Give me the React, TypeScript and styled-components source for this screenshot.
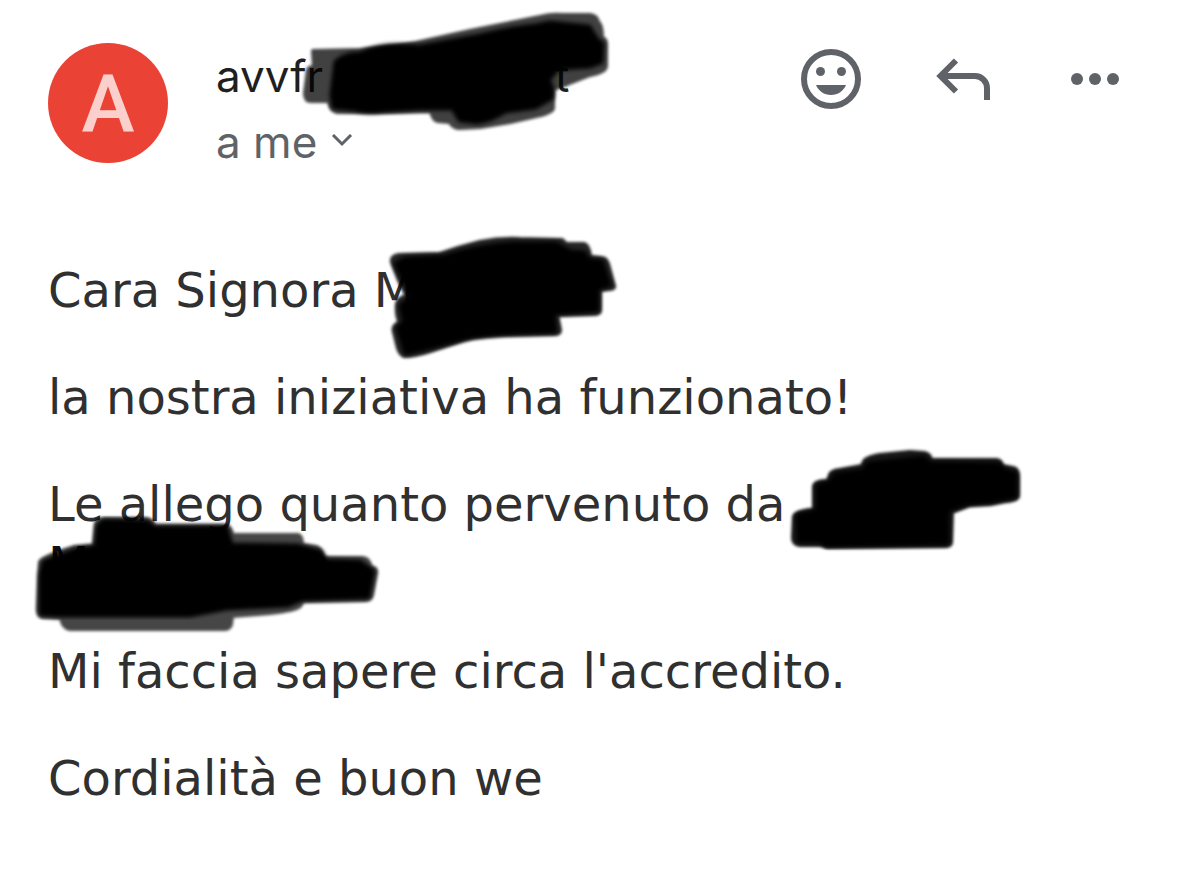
import React from 'react';
import styled, { createGlobalStyle } from 'styled-components';

const GlobalStyle = createGlobalStyle`
  body {
    margin: 0;
    background: #ffffff;
  }
`;

const Mail = styled.article`
  padding: 43px 48px 48px;
  color: #303030;
`;

const Header = styled.header`
  display: flex;
  align-items: flex-start;
`;

const Avatar = styled.div`
  flex: none;
  width: 120px;
  height: 120px;
  margin-right: 48px;
  border-radius: 50%;
  background: #ea4335;
  color: #fbd0cc;
  font: 500 80px/122px Roboto, sans-serif;
  text-align: center;
`;

const Sender = styled.div`
  flex: 1;
  min-width: 0;
  font-family: Inter, sans-serif;
  font-size: 44px;
  line-height: 66px;
`;

const Name = styled.div`
  position: relative;
  color: #1f1f1f;
  white-space: nowrap;
`;

const Gap = styled.span<{ $width: number }>`
  display: inline-block;
  width: ${({ $width }) => $width}px;
`;

const Recipient = styled.button`
  display: flex;
  align-items: center;
  gap: 14px;
  padding: 0;
  border: 0;
  background: none;
  color: #5f6368;
  font: inherit;
`;

const Actions = styled.div`
  flex: none;
  display: flex;
  gap: 60px;
`;

const IconButton = styled.button`
  width: 72px;
  height: 72px;
  padding: 0;
  border: 0;
  background: none;
  color: #5f6368;

  svg {
    display: block;
  }
`;

const Body = styled.div`
  margin-top: 85px;
  font-family: Verdana, 'DejaVu Sans', sans-serif;
  font-size: 48px;
  line-height: 60px;
`;

const Paragraph = styled.p`
  position: relative;
  margin: 0 0 47px;
`;

const Faint = styled.span`
  color: #111111;
`;

const Marker = styled.svg<{ $left: number; $top: number }>`
  position: absolute;
  left: ${({ $left }) => $left}px;
  top: ${({ $top }) => $top}px;
  overflow: visible;
  pointer-events: none;
`;

type ScribbleProps = {
  id: string;
  left: number;
  top: number;
  width: number;
  height: number;
  edge: string;
  core: string;
  edgeOpacity?: number;
};

function Scribble({ id, left, top, width, height, edge, core, edgeOpacity = 0.85 }: ScribbleProps) {
  return (
    <Marker $left={left} $top={top} width={width} height={height} viewBox={`0 0 ${width} ${height}`} aria-hidden="true">
      <filter id={id} x="-5%" y="-5%" width="110%" height="110%">
        <feGaussianBlur stdDeviation="1.4" />
      </filter>
      <filter id={`${id}-core`} x="-5%" y="-5%" width="110%" height="110%">
        <feGaussianBlur stdDeviation="2" />
      </filter>
      <g strokeLinejoin="round" stroke="#000">
        <path d={edge} strokeWidth="4" opacity={edgeOpacity} filter={`url(#${id})`} />
        <path d={core} strokeWidth="5" filter={`url(#${id}-core)`} />
      </g>
    </Marker>
  );
}

export default function App() {
  return (
    <>
      <GlobalStyle />
      <Mail>
        <Header>
          <Avatar>A</Avatar>
          <Sender>
            <Name>
              avvfr
              <Gap $width={232} />t
              <Scribble
                id="soft-name"
                left={84}
                top={-43}
                width={320}
                height={140}
                edgeOpacity={0.74}
                edge="M13 51 L60 50 L97 46 L116 43 L170 31 L240 17 Q252 14 262 15 L290 15 Q297 16 298 22 Q302 24 302 38 Q306 39 306 44 L306 66 Q306 72 290 75 L267 84 L253 89 L253 108 Q253 113 232 117 L210 122 L180 127 L160 128 Q153 128 150 122 L138 121 Q133 120 131 111 L90 112 L37 112 Q30 110 29 101 L11 101 Q5 101 5 93 L8 70 Q9 67 14 67Z"
                core="M36 62 Q45 54 60 54 Q78 46 97 46 L120 47 L180 36 Q212 28 236 26 L250 23 L289 27 L297 40 L302 44 L301 62 L290 66 L258 68 L248 80 Q254 90 251 98 L235 107 L205 111 Q192 120 177 122 L160 120 L153 108 L120 108 L85 110 Q66 113 55 109 L34 107 L32 95Z"
              />
            </Name>
            <Recipient type="button">
              a me
              <svg width="22" height="16" viewBox="0 0 22 16" fill="none" stroke="currentColor" strokeWidth="3" aria-hidden="true">
                <path d="M2 1 L11 10 L20 1" />
              </svg>
            </Recipient>
          </Sender>
          <Actions>
            <IconButton type="button" aria-label="Aggiungi reazione">
              <svg width="72" height="72" viewBox="0 0 72 72" fill="currentColor">
                <circle cx="36" cy="36" r="27" fill="none" stroke="currentColor" strokeWidth="6" />
                <circle cx="25.5" cy="28.5" r="4.5" />
                <circle cx="46.5" cy="28.5" r="4.5" />
                <path d="M21 42 H51 C48.500 48 43 52 36 52 S23.500 48 21 42Z" />
              </svg>
            </IconButton>
            <IconButton type="button" aria-label="Rispondi">
              <svg width="72" height="72" viewBox="0 0 72 72" fill="none" stroke="currentColor" strokeWidth="6">
                <path d="M29 17.500 L13.500 33 L29 48.500 M14 33 H48 A12 12 0 0 1 60 45 V57" />
              </svg>
            </IconButton>
            <IconButton type="button" aria-label="Altro">
              <svg width="72" height="72" viewBox="0 0 72 72" fill="currentColor">
                <circle cx="18" cy="36" r="6" />
                <circle cx="36" cy="36" r="6" />
                <circle cx="54" cy="36" r="6" />
              </svg>
            </IconButton>
          </Actions>
        </Header>

        <Body>
          <Paragraph>
            Cara Signora M
            <Scribble
              id="soft-surname"
              left={322}
              top={-40}
              width={250}
              height={140}
              edge="M22 42 Q21 36 29 35 L70 34 Q90 27 110 22 Q130 18 150 19 L192 20 L196 24 L214 24 Q219 25 220 37 L231 38 Q236 38 238 44 L244 66 Q245 69 238 69 L230 70 L230 90 Q230 94 223 94 L187 95 L190 110 Q190 114 184 114 L135 115 Q105 116 90 121 L60 131 Q45 136 34 136 Q30 134 28 128 L24 112 Q22 105 30 103 Q26 96 27 84 Q28 78 37 76 L29 60Z"
              core="M26 44 L35 39 L75 37 Q100 28 140 24 L186 24 L200 32 L214 33 L218 40 L232 42 L239 65 L227 68 L227 90 L183 93 L185 111 L135 113 L102 116 Q75 123 60 127 L36 133 L28 108 L35 102 L31 86 L42 76 L33 58Z"
            />
          </Paragraph>
          <Paragraph>la nostra iniziativa ha funzionato!</Paragraph>
          <Paragraph>
            Le allego quanto pervenuto da
            <br />
            <Faint>
              M
              <Gap $width={211} />o
            </Faint>
            <Scribble
              id="soft-bank"
              left={732}
              top={-34}
              width={260}
              height={120}
              edgeOpacity={0.9}
              edge="M84 22 Q84 18 100 15 L130 12 L144 13 Q150 14 151 20 L216 20 Q221 20 222 26 L233 28 Q238 29 238 36 L238 56 Q238 60 225 61 L210 64 L190 65 L172 72 L171 102 Q171 106 164 106 L48 107 L42 105 L20 105 Q13 104 13 98 L14 77 Q15 71 34 70 L34 47 Q34 41 48 41 L50 35 Q51 31 60 30 L82 26Z"
              core="M88 24 L143 18 L150 24 L219 25 L224 31 L235 34 L235 56 L210 61 L188 63 L167 70 L167 103 L45 105 L41 101 L19 101 L18 76 L38 71 L38 46 L51 43 L55 35 L84 31Z"
            />
            <Scribble
              id="soft-city"
              left={-28}
              top={26}
              width={370}
              height={140}
              edgeOpacity={0.72}
              edge="M76 24 Q77 19 84 19 L126 19 Q133 20 134 26 L206 26 Q211 27 212 35 L278 35 Q282 36 282 45 L296 47 Q302 49 303 58 L343 58 Q350 59 350 67 Q357 68 356 73 L352 95 Q351 100 345 100 L283 101 L280 106 Q276 110 250 113 L212 116 L211 124 Q210 129 204 129 L50 129 Q43 128 41 118 L22 117 Q17 115 18 106 L20 62 Q22 57 55 47 L74 46Z"
              core="M78 26 L84 21 L127 22 L134 28 L206 28 L211 45 L277 46 L300 52 L306 61 L340 62 L348 68 L353 71 L348 97 L282 99 L268 105 L206 108 L170 115 L40 115 L21 114 L21 75 L24 62 L56 50 L76 47Z"
            />
          </Paragraph>
          <Paragraph>Mi faccia sapere circa l'accredito.</Paragraph>
          <Paragraph>Cordialità e buon we</Paragraph>
        </Body>
      </Mail>
    </>
  );
}
